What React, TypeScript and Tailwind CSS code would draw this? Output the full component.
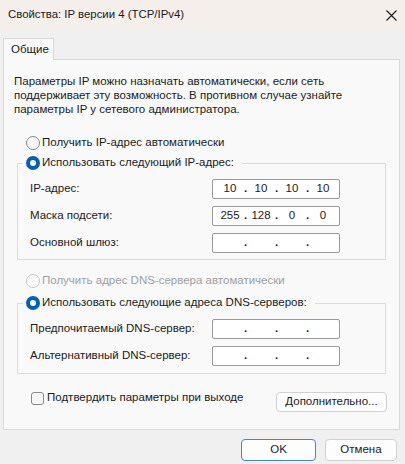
import React from "react";

const font = { fontFamily: '"Liberation Sans", Arial, sans-serif' };

function Radio({ checked, disabled }: { checked?: boolean; disabled?: boolean }) {
  if (checked) {
    return (
      <span className="flex h-[14px] w-[14px] shrink-0 items-center justify-center rounded-full bg-[#005fb8]">
        <span className="h-[6px] w-[6px] rounded-full bg-white" />
      </span>
    );
  }
  return (
    <span
      className={
        disabled
          ? "h-[14px] w-[14px] shrink-0 rounded-full border border-[#c8c8c8] bg-[#fbfbfb]"
          : "h-[14px] w-[14px] shrink-0 rounded-full border border-[#8a8a8a] bg-[#f6f6f6]"
      }
    />
  );
}

function IpBox({ parts }: { parts: string[] }) {
  return (
    <div className="flex h-[20px] w-[128px] items-center rounded-[2px] border border-[#9a9a9a] bg-white pl-[4px] text-[11.5px] text-[#1b1b1b]">
      {parts.map((p, i) => (
        <React.Fragment key={i}>
          {i > 0 && <span className="w-[5px] text-center font-bold">.</span>}
          <span className="w-[26px] text-center">{p}</span>
        </React.Fragment>
      ))}
    </div>
  );
}

function Row({ label, parts }: { label: string; parts: string[] }) {
  return (
    <div className="flex h-[20px] items-center">
      <span className="w-[182px]">{label}</span>
      <IpBox parts={parts} />
    </div>
  );
}

export default function App() {
  const empty = ["", "", "", ""];
  return (
    <div className="h-[464px] w-[405px] overflow-hidden bg-[#f0f0f0]" style={font}>
      {/* title bar */}
      <div className="flex h-[30px] items-center justify-between bg-[#f5efec] pl-[8px] pr-[7px]">
        <span className="text-[11.4px] text-[#1a1a1a]">Свойства: IP версии 4 (TCP/IPv4)</span>
        <svg width="11" height="11" viewBox="0 0 11 11" className="mr-[1px]">
          <path d="M0.5 0.5 L10.5 10.5 M10.5 0.5 L0.5 10.5" stroke="#1a1a1a" strokeWidth="1.1" />
        </svg>
      </div>

      {/* tab */}
      <div className="pl-[3px] pt-[8px]">
        <div className="relative z-10 -mb-px flex h-[22px] w-[51px] items-center border border-b-0 border-[#d9d9d9] bg-[#f9f9f9] pl-[7px] text-[11.5px] text-[#1a1a1a]">
          Общие
        </div>
      </div>

      {/* panel */}
      <div className="ml-[3px] h-[371px] w-[397px] border border-[#d9d9d9] bg-[#f9f9f9] pl-[8px] pt-[14px] text-[11.5px] text-[#1b1b1b]">
        <p className="pl-[2px] leading-[14px]">
          Параметры IP можно назначать автоматически, если сеть
          <br />
          поддерживает эту возможность. В противном случае узнайте
          <br />
          параметры IP у сетевого администратора.
        </p>

        <div className="ml-[14px] mt-[19px] flex h-[16px] items-center gap-[2px]">
          <Radio />
          <span>Получить IP-адрес автоматически</span>
        </div>

        <fieldset className="ml-[5px] mt-[4px] w-[369px] border border-[#dcdcdc] pb-[6px] pl-[12px]">
          <legend className="-ml-[7px] flex h-[16px] items-center gap-[2px] pl-[3px] pr-[8px]">
            <Radio checked />
            <span>Использовать следующий IP-адрес:</span>
          </legend>
          <div className="flex flex-col gap-[7px] pt-[8px]">
            <Row label="IP-адрес:" parts={["10", "10", "10", "10"]} />
            <Row label="Маска подсети:" parts={["255", "128", "0", "0"]} />
            <Row label="Основной шлюз:" parts={empty} />
          </div>
        </fieldset>

        <div className="ml-[14px] mt-[13px] flex h-[16px] items-center gap-[2px] text-[#a0a0a0]">
          <Radio disabled />
          <span>Получить адрес DNS-сервера автоматически</span>
        </div>

        <fieldset className="ml-[5px] mt-[6px] w-[369px] border border-[#dcdcdc] pb-[7px] pl-[12px]">
          <legend className="-ml-[7px] flex h-[16px] items-center gap-[2px] pl-[3px] pr-[8px]">
            <Radio checked />
            <span>Использовать следующие адреса DNS-серверов:</span>
          </legend>
          <div className="flex flex-col gap-[7px] pt-[8px]">
            <Row label="Предпочитаемый DNS-сервер:" parts={empty} />
            <Row label="Альтернативный DNS-сервер:" parts={empty} />
          </div>
        </fieldset>

        <div className="mt-[16px] flex items-start">
          <div className="ml-[19px] flex h-[16px] items-center gap-[3px]">
            <span className="h-[13px] w-[13px] rounded-[3px] border border-[#8a8a8a] bg-[#f6f6f6]" />
            <span>Подтвердить параметры при выходе</span>
          </div>
          <button className="ml-auto mr-[12px] mt-[2px] flex h-[20px] w-[111px] items-center justify-center rounded-[4px] border border-[#d0d0d0] bg-[#fdfdfd] text-[11.5px] text-[#1b1b1b]">
            Дополнительно...
          </button>
        </div>
      </div>

      {/* dialog buttons */}
      <div className="mt-[9px] flex justify-end gap-[9px] pr-[8px]">
        <button className="flex h-[22px] w-[75px] items-center justify-center rounded-[4px] border border-[#4a86c5] bg-[#fdfdfd] text-[11.5px] text-[#1b1b1b]">
          OK
        </button>
        <button className="flex h-[22px] w-[72px] items-center justify-center rounded-[4px] border border-[#d0d0d0] bg-[#fdfdfd] text-[11.5px] text-[#1b1b1b]">
          Отмена
        </button>
      </div>
    </div>
  );
}
